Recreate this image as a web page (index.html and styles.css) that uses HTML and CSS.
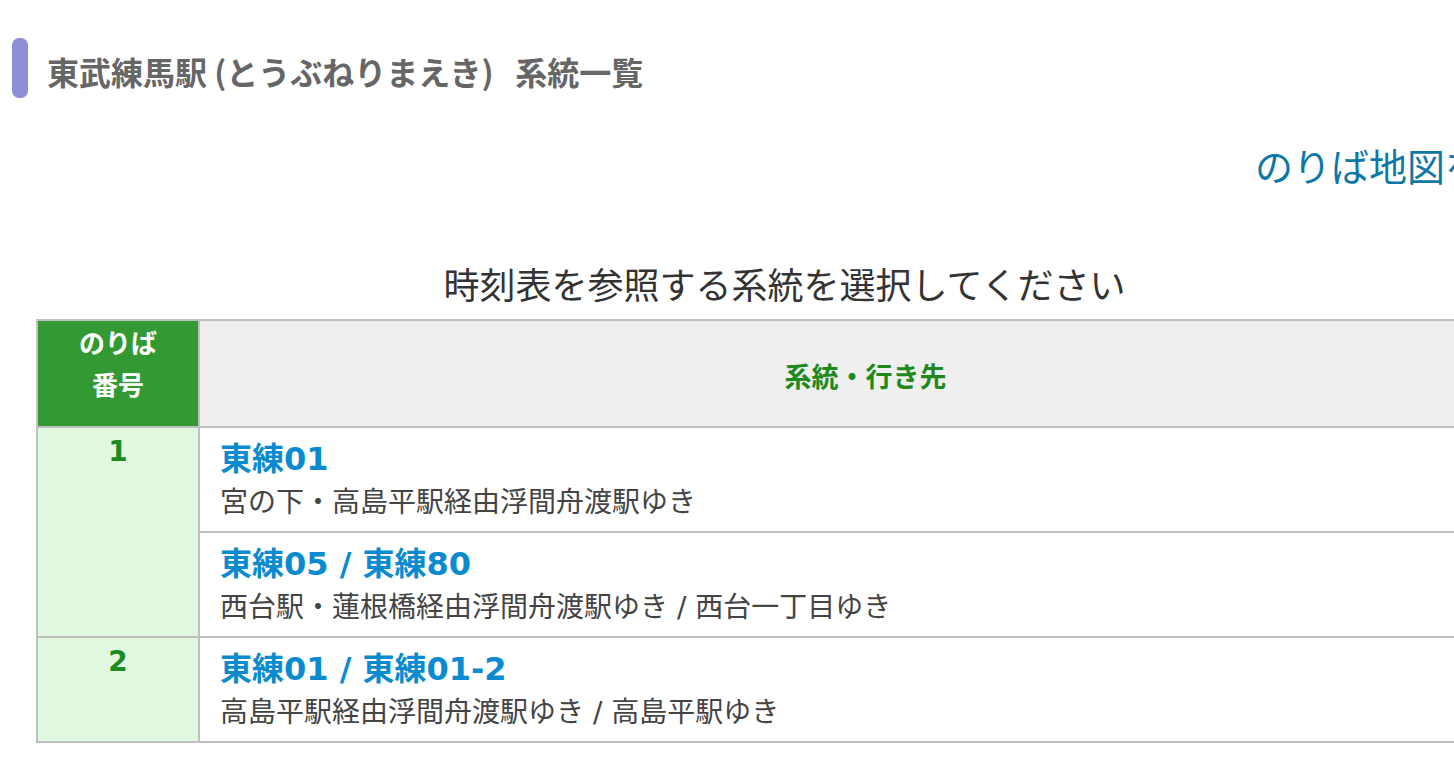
FILE: index.html
```html
<!DOCTYPE html>
<html lang="ja">
<head>
<meta charset="utf-8">
<title>東武練馬駅 系統一覧</title>
<link rel="stylesheet" href="styles.css">
</head>
<body>
<div class="page">
  <h1 class="title"><span class="title-bar"></span><span class="title-text">東武練馬駅 (とうぶねりまえき)&nbsp;&nbsp; 系統一覧</span></h1>
  <div class="map-link-row"><a class="map-link" href="#">のりば地図を見る</a></div>
  <table class="routes">
    <caption class="routes-caption">時刻表を参照する系統を選択してください</caption>
    <thead>
      <tr>
        <th class="col-no">のりば<br>番号</th>
        <th class="col-route">系統・行き先</th>
      </tr>
    </thead>
    <tbody>
      <tr>
        <td class="no" rowspan="2">1</td>
        <td class="route"><a class="route-name" href="#">東練01</a><div class="route-dest">宮の下・高島平駅経由浮間舟渡駅ゆき</div></td>
      </tr>
      <tr>
        <td class="route"><a class="route-name" href="#">東練05 / 東練80</a><div class="route-dest">西台駅・蓮根橋経由浮間舟渡駅ゆき / 西台一丁目ゆき</div></td>
      </tr>
      <tr>
        <td class="no">2</td>
        <td class="route"><a class="route-name" href="#">東練01 / 東練01-2</a><div class="route-dest">高島平駅経由浮間舟渡駅ゆき / 高島平駅ゆき</div></td>
      </tr>
    </tbody>
  </table>
</div>
</body>
</html>
```

FILE: styles.css
```css
html, body {
  margin: 0;
  padding: 0;
  overflow: hidden;
  background: #ffffff;
}

body {
  font-family: "Noto Sans CJK JP", "Noto Sans", sans-serif;
  color: #333333;
}

.page {
  width: 1570px;
  padding-top: 38px;
}

.title {
  display: flex;
  align-items: center;
  gap: 19px;
  margin: 0 0 0 12px;
  height: 60px;
  font-size: 32px;
  font-weight: 700;
  color: #666666;
  line-height: 60px;
}

.title-bar {
  width: 16px;
  height: 60px;
  border-radius: 7px;
  background: #8e8fd8;
  flex: none;
}

.title-text {
  padding-top: 6px;
}

.map-link-row {
  margin-top: 42px;
  height: 50px;
  line-height: 50px;
  text-align: right;
  padding-right: 11px;
}

.map-link {
  font-size: 38px;
  color: #0f77a6;
  text-decoration: none;
}

.routes {
  margin: 0 0 0 36px;
  width: 1497px;
  border-collapse: collapse;
  border: 2px solid #c0c0c0;
}

.routes-caption {
  font-size: 36px;
  line-height: 50px;
  color: #333333;
  padding-bottom: 11px;
  margin-top: 68px;
}

.routes th,
.routes td {
  border: 2px solid #c0c0c0;
  padding: 0;
}

.routes th.col-no {
  width: 160px;
  background: #339933;
  color: #ffffff;
  font-size: 26px;
  font-weight: 700;
  line-height: 42px;
  padding: 0 0 21px;
  vertical-align: top;
}

.routes th.col-route {
  background: #efefef;
  color: #1e8a1e;
  font-size: 27px;
  font-weight: 700;
  padding-top: 4px;
}

.routes td.no {
  background: #e0f8e0;
  color: #1a8a22;
  font-family: "DejaVu Sans", "Noto Sans CJK JP", sans-serif;
  font-size: 28px;
  font-weight: 700;
  text-align: center;
  vertical-align: top;
  line-height: 40px;
  padding-top: 4px;
}

.routes td.route {
  padding: 11px 20px 4px;
  vertical-align: top;
}

.route-name {
  display: block;
  font-family: "DejaVu Sans", "Noto Sans CJK JP", sans-serif;
  font-size: 32px;
  font-weight: 700;
  line-height: 40px;
  color: #0a8bd0;
  text-decoration: none;
}

.route-dest {
  font-family: "DejaVu Sans", "Noto Sans CJK JP", sans-serif;
  font-size: 28px;
  line-height: 48px;
  color: #444444;
}
```
